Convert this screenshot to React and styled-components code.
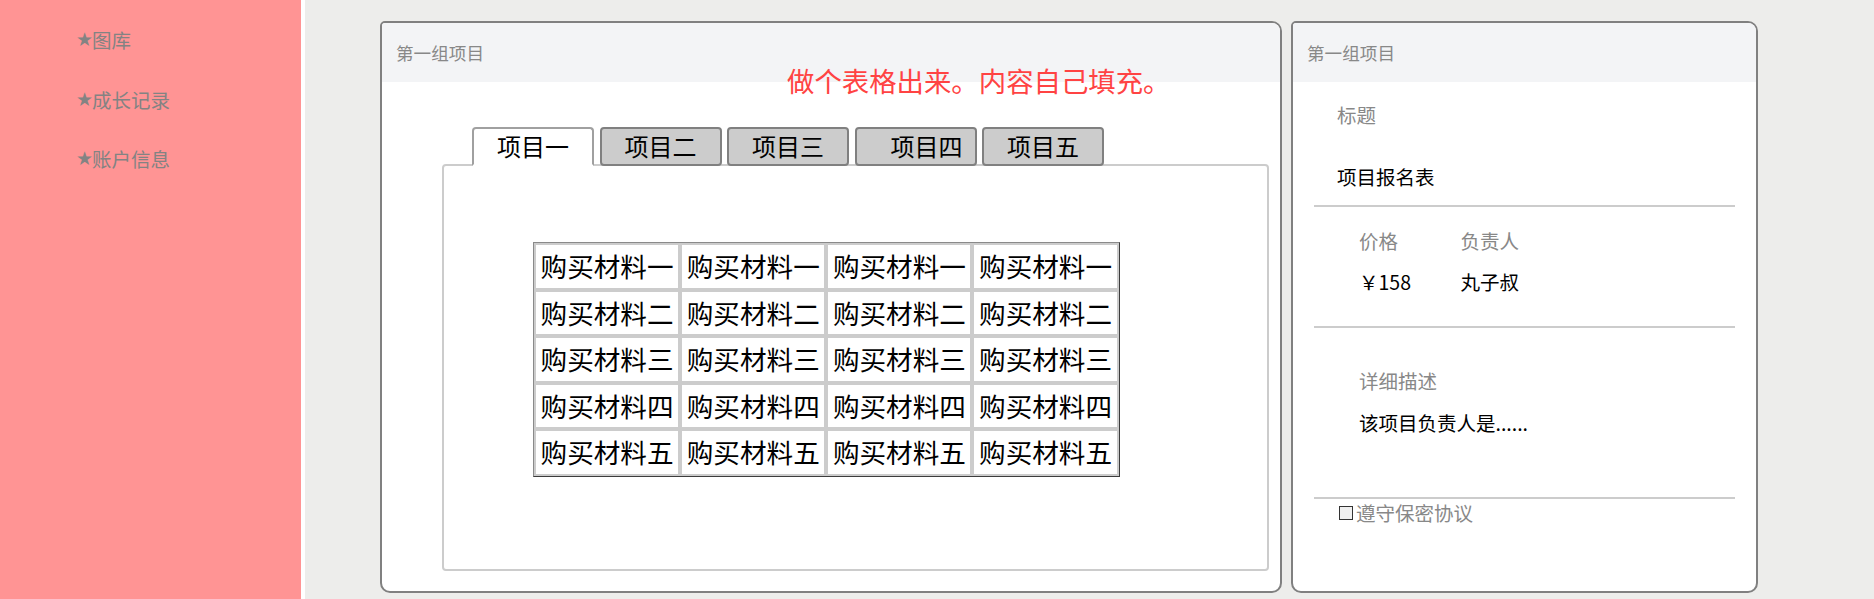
import React from "react";
import styled, { createGlobalStyle } from "styled-components";

const GlobalStyle = createGlobalStyle`
  html, body { margin: 0; padding: 0; }
  body {
    background: #ededeb;
    font-family: "Noto Sans CJK SC", "Noto Sans", sans-serif;
  }
  *, *::before, *::after { box-sizing: border-box; }
`;

const Page = styled.div`
  display: flex;
  height: 599px;
  overflow: hidden;
`;

const Sidebar = styled.nav`
  width: 305px;
  flex: none;
  background: #ff9494;
  border-right: 4px solid #ffffff;
  padding: 10px 0 0 76px;
`;

const NavItem = styled.div`
  height: 59.5px;
  display: flex;
  align-items: center;
  font-size: 19.5px;
  color: #838383;
`;

const Star = styled.span`
  display: inline-block;
  width: 16px;
  font-family: "DejaVu Sans", sans-serif;
  font-size: 19px;
  line-height: 1;
  overflow: visible;
`;

const Main = styled.main`
  flex: 1;
  display: flex;
  align-items: flex-start;
  gap: 9px;
  padding: 21px 0 0 75px;
`;

const Card = styled.section`
  position: relative;
  flex: none;
  width: ${(p) => p.$w}px;
  height: 572px;
  background: #ffffff;
  border: 2px solid #808080;
  border-radius: 5px 10px 10px 10px;
  overflow: hidden;
  display: flex;
  flex-direction: column;
`;

const CardHeader = styled.header`
  flex: none;
  height: 59px;
  background: #f3f4f6;
  padding-left: 14px;
  display: flex;
  align-items: center;
  font-size: 17.6px;
  color: #888888;
`;

const Note = styled.div`
  position: absolute;
  left: 405px;
  top: 40px;
  font-size: 27.4px;
  line-height: 34px;
  color: #ff4343;
  white-space: nowrap;
`;

const TabArea = styled.div`
  padding: 45px 11px 0 60px;
`;

const TabRow = styled.div`
  position: relative;
  z-index: 1;
  display: flex;
  gap: 5.5px;
  padding-left: 30px;
  margin-bottom: -2px;
`;

const Tab = styled.div`
  width: 122px;
  height: 39px;
  border: 2px solid ${(p) => (p.$active ? "#a0a0a0" : "#808080")};
  border-bottom-color: ${(p) => (p.$active ? "#ffffff" : "#808080")};
  border-radius: ${(p) => (p.$active ? "4px 4px 0 0" : "4px")};
  background: ${(p) => (p.$active ? "#ffffff" : "#cccccc")};
  padding-left: ${(p) => p.$shift || 0}px;
  font-size: 24px;
  line-height: 34px;
  color: #000000;
  text-align: center;
  cursor: pointer;
`;

const TabPanel = styled.div`
  height: 407px;
  border: 2px solid #cccccc;
  border-radius: 4px;
  padding: 76px 0 0 89px;
`;

const Grid = styled.table`
  border-collapse: separate;
  border-spacing: 0;
  border: 1px solid;
  border-color: #8a8a8a #3c3c3c #3c3c3c #8a8a8a;
  background: #cccccc;
`;

const Cell = styled.td`
  border: 2px solid #cccccc;
  background: #ffffff;
  background-clip: padding-box;
  padding: 0 4.6px;
  font-size: 26.6px;
  line-height: 42.6px;
  color: #000000;
  white-space: nowrap;
`;

const SideBody = styled.div`
  padding: 0 21px;
`;

const Block = styled.div`
  padding-left: ${(p) => p.$indent}px;
  margin-top: ${(p) => p.$mt || 0}px;
`;

const Label = styled.div`
  font-size: 19.5px;
  line-height: 30px;
  color: #888888;
`;

const Value = styled.div`
  margin-top: ${(p) => p.$mt || 0}px;
  font-size: 19.5px;
  line-height: 30px;
  color: #000000;
`;

const Divider = styled.hr`
  border: 0;
  height: 2px;
  background: #cccccc;
  margin: ${(p) => p.$mt}px 0 0;
`;

const InfoGrid = styled.div`
  display: grid;
  grid-template-columns: 101.5px auto;
  row-gap: 11px;
`;

const CheckRow = styled.label`
  display: flex;
  align-items: center;
  padding-left: 25px;
  font-size: 19.5px;
  line-height: 28px;
  color: #888888;
`;

const Box = styled.input`
  appearance: none;
  width: 14px;
  height: 14px;
  margin: 0 3px 0 0;
  border: 1.5px solid #333333;
  background: #f0f0f0;
`;

const navItems = ["图库", "成长记录", "账户信息"];
const tabs = [
  { label: "项目一", active: true },
  { label: "项目二" },
  { label: "项目三" },
  { label: "项目四", shift: 22 },
  { label: "项目五" },
];
const rows = ["一", "二", "三", "四", "五"];

export default function App() {
  return (
    <>
      <GlobalStyle />
      <Page>
        <Sidebar>
          {navItems.map((n) => (
            <NavItem key={n}>
              <Star>★</Star>
              {n}
            </NavItem>
          ))}
        </Sidebar>
        <Main>
          <Card $w={902}>
            <CardHeader>第一组项目</CardHeader>
            <Note>做个表格出来。内容自己填充。</Note>
            <TabArea>
              <TabRow>
                {tabs.map((t) => (
                  <Tab key={t.label} $active={t.active} $shift={t.shift}>
                    {t.label}
                  </Tab>
                ))}
              </TabRow>
              <TabPanel>
                <Grid>
                  <tbody>
                    {rows.map((r) => (
                      <tr key={r}>
                        {[0, 1, 2, 3].map((c) => (
                          <Cell key={c}>购买材料{r}</Cell>
                        ))}
                      </tr>
                    ))}
                  </tbody>
                </Grid>
              </TabPanel>
            </TabArea>
          </Card>
          <Card $w={467}>
            <CardHeader>第一组项目</CardHeader>
            <SideBody>
              <Block $indent={23} $mt={18}>
                <Label>标题</Label>
                <Value $mt={32}>项目报名表</Value>
              </Block>
              <Divider $mt={13} />
              <Block $indent={45} $mt={19}>
                <InfoGrid>
                  <Label>价格</Label>
                  <Label>负责人</Label>
                  <Value>￥158</Value>
                  <Value>丸子叔</Value>
                </InfoGrid>
              </Block>
              <Divider $mt={29} />
              <Block $indent={45} $mt={38}>
                <Label>详细描述</Label>
                <Value $mt={12}>该项目负责人是......</Value>
              </Block>
              <Divider $mt={59} />
              <CheckRow>
                <Box type="checkbox" />
                遵守保密协议
              </CheckRow>
            </SideBody>
          </Card>
        </Main>
      </Page>
    </>
  );
}
